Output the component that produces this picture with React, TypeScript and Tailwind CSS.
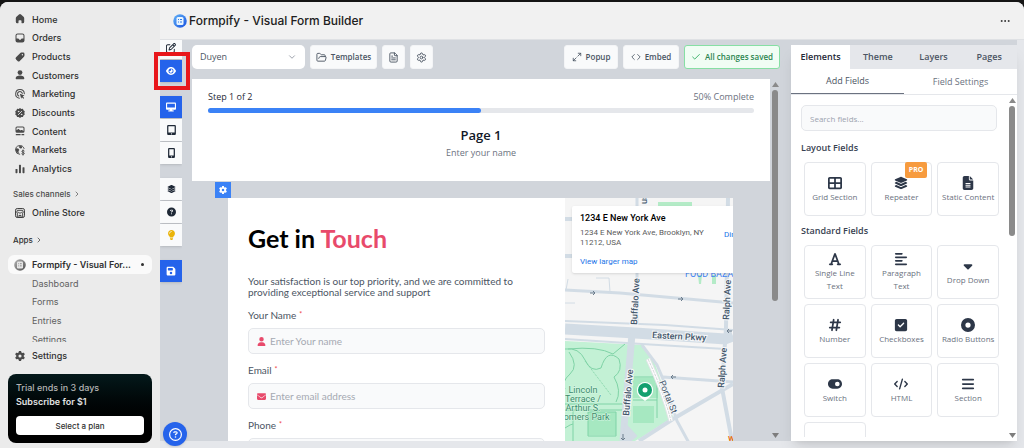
import React, { useState } from "react";
import {
  Check,
  ChevronDown,
  ChevronRight,
  Code,
  Ellipsis,
  FileText,
  FolderOpen,
  Maximize2,
  Settings,
} from "lucide-react";
import {
  FaAlignLeft,
  FaBars,
  FaCaretDown,
  FaCircleDot,
  FaCircleQuestion,
  FaCode,
  FaDesktop,
  FaEnvelope,
  FaEye,
  FaFileLines,
  FaFloppyDisk,
  FaFont,
  FaGear,
  FaHashtag,
  FaLayerGroup,
  FaLightbulb,
  FaLocationArrow,
  FaMobileScreenButton,
  FaRegCircleQuestion,
  FaRegPenToSquare,
  FaSquareCheck,
  FaTableCellsLarge,
  FaTabletScreenButton,
  FaToggleOn,
  FaUser,
} from "react-icons/fa6";

/* ---------------- SIDEBAR ICONS ---------------- */

const Glyph = ({ children }: { children: React.ReactNode }) => (
  <svg viewBox="0 0 20 20" className="w-3 h-3 shrink-0" fill="currentColor">
    {children}
  </svg>
);

const navItems = [
  {
    label: "Home",
    icon: (
      <path d="M8.3 2.6a2.6 2.6 0 0 1 3.4 0l4.2 3.7c.7.6 1.1 1.5 1.1 2.4v5.8a2.5 2.5 0 0 1-2.5 2.5h-1.3a.7.7 0 0 1-.7-.7v-3.1a1.2 1.2 0 0 0-1.2-1.2H8.7a1.2 1.2 0 0 0-1.2 1.2v3.1a.7.7 0 0 1-.7.7H5.5A2.5 2.5 0 0 1 3 14.500V8.700c0-.9.4-1.8 1.100-2.400z" />
    ),
  },
  {
    label: "Orders",
    icon: (
      <path
        fillRule="evenodd"
        d="M6 2.500h8A3.500 3.500 0 0 1 17.500 6v8a3.500 3.500 0 0 1-3.500 3.500H6A3.500 3.500 0 0 1 2.500 14V6A3.500 3.500 0 0 1 6 2.500zM6 4.200A1.800 1.800 0 0 0 4.200 6v5h2.600c.7 0 1.200.4 1.500 1 .3.600.8 1 1.700 1s1.400-.4 1.700-1c.3-.6.8-1 1.500-1h2.600V6A1.800 1.800 0 0 0 14 4.200z"
      />
    ),
  },
  {
    label: "Products",
    icon: (
      <path
        fillRule="evenodd"
        d="M10.600 3.300c.6-.6 1.400-.8 2.200-.8h2.400a2.300 2.300 0 0 1 2.300 2.300v2.400c0 .8-.3 1.600-.9 2.200l-7 7.200a2.600 2.600 0 0 1-3.700 0l-2.500-2.500a2.600 2.600 0 0 1 0-3.700zM14 7.300a1.200 1.200 0 1 0 0-2.400 1.200 1.200 0 0 0 0 2.400z"
      />
    ),
  },
  {
    label: "Customers",
    icon: (
      <>
        <circle cx="10" cy="6" r="4" />
        <path d="M2.800 15.600c0-3 3.200-4.600 7.200-4.600s7.200 1.600 7.200 4.600c0 .9-.7 1.600-1.600 1.600H4.400c-.9 0-1.600-.7-1.600-1.600z" />
      </>
    ),
  },
  {
    label: "Marketing",
    icon: (
      <>
        <g fill="none" stroke="currentColor" strokeWidth="1.700" strokeLinecap="round">
          <path d="M9 17A7.200 7.200 0 1 1 17.200 9.500" />
          <path d="M8 13.400A4 4 0 1 1 13.800 9" />
        </g>
        <path d="M9.800 9.700l7.700 2.700-3 1.600 2.600 2.600-1.300 1.300-2.600-2.600-1.200 2.500z" />
      </>
    ),
  },
  {
    label: "Discounts",
    icon: (
      <>
        <path d="M10 1.700l2.200 1.500 2.700-.1.900 2.500 2.200 1.600-.8 2.800.8 2.700-2.200 1.600-.9 2.500-2.700-.1L10 18.300l-2.200-1.600-2.700.1-.9-2.500L2 12.700 2.800 10 2 7.200l2.200-1.600.9-2.500 2.700.1z" />
        <g stroke="#ebebeb" strokeWidth="1.500" strokeLinecap="round" fill="#ebebeb">
          <path d="M7.300 12.700l5.400-5.400" />
          <circle cx="7.500" cy="7.700" r=".5" />
          <circle cx="12.500" cy="12.300" r=".5" />
        </g>
      </>
    ),
  },
  {
    label: "Content",
    icon: (
      <>
        <path
          fillRule="evenodd"
          d="M5 2.500h10A2.500 2.500 0 0 1 17.500 5v5.500A2.500 2.500 0 0 1 15 13H5a2.500 2.500 0 0 1-2.500-2.500V5A2.500 2.500 0 0 1 5 2.500zM4.200 8.800L6.500 7c.6-.4 1.200-.4 1.700.1l2.300 2.100 1.200-.8c.6-.4 1.300-.3 1.800.1l2.300 1.700V5c0-.5-.3-.8-.8-.8H5c-.5 0-.8.300-.8.800z"
        />
        <path d="M3 15h8v2H3zM12.500 15H17v2h-4.500z" />
      </>
    ),
  },
  {
    label: "Markets",
    icon: (
      <>
        <path
          fill="none"
          stroke="currentColor"
          strokeWidth="1.600"
          strokeLinecap="round"
          d="M9.500 17.200A7.300 7.300 0 1 1 16.800 7.500"
        />
        <path d="M3.500 7l3.500.500 2 2.500-1.500 1.500.5 4.500L4 13.500 2.800 10zM9 3l5 1-1 3-2.500.5L8.500 6z" />
        <path
          fill="none"
          stroke="currentColor"
          strokeWidth="1.600"
          strokeLinecap="round"
          d="M17 11.500c-1-1-3.800-.8-3.800 1 0 2 4 1 4 3.200 0 1.800-3 2-4.200.8M15 9.800v8.700"
        />
      </>
    ),
  },
  {
    label: "Analytics",
    icon: (
      <>
        <rect x="2.500" y="10" width="3.300" height="7" rx="1" />
        <rect x="8.300" y="3" width="3.300" height="14" rx="1" />
        <rect x="14.200" y="7" width="3.300" height="10" rx="1" />
      </>
    ),
  },
];

const StoreIcon = () => (
  <Glyph>
    <g fill="none" stroke="currentColor" strokeWidth="1.500">
      <rect x="2.500" y="2.500" width="15" height="15" rx="3" />
      <path d="M5.500 5.500h9l1 3.500c-.8 1.500-2.500 1.500-3.300 0-.9 1.500-3.500 1.500-4.400 0-.8 1.500-2.500 1.500-3.300 0zM5.500 10.500v7M14.500 10.500v7M8.300 17.500v-3.500h3.400v3.500" />
    </g>
  </Glyph>
);

const FormpifyLogo = ({ className, tone }: { className: string; tone: "blue" | "gray" }) => {
  const blue = tone === "blue";
  return (
    <svg viewBox="0 0 28 28" className={className}>
      <defs>
        <linearGradient id={`logo-${tone}`} x1="0" x2="1" y1="0" y2="1">
          <stop offset="0" stopColor={blue ? "#63b3f7" : "#b5b5b5"} />
          <stop offset="1" stopColor={blue ? "#1550e0" : "#4f4f4f"} />
        </linearGradient>
      </defs>
      <circle cx="14" cy="14" r="13.500" fill={`url(#logo-${tone})`} />
      <path
        d="M10 6h8a3 3 0 0 1 3 3v10a3 3 0 0 1-3 3h-8a3 3 0 0 1-3-3V9a3 3 0 0 1 3-3z"
        fill={blue ? "#e9f5ff" : "#e6e6e6"}
      />
      <path
        d="M10 11h2M14 11h4M10 16h2M14 16h4"
        stroke={blue ? "#2f7bea" : "#808080"}
        strokeWidth="2"
      />
    </svg>
  );
};

/* ---------------- SIDEBAR ---------------- */

const Sidebar = () => (
  <aside className="w-40 shrink-0 flex flex-col bg-[#ebebeb] font-[Inter,sans-serif] text-[9px] font-medium text-[#303030] overflow-hidden">
    <nav className="flex flex-col h-full min-h-0">
      <div className="h-[168px] mt-2 shrink-0 grid auto-rows-fr">
        {navItems.map((item) => (
          <a key={item.label} href="#" className="flex items-center gap-[6px] pl-[14px]">
            <span className="text-[#4a4a4a]">
              <Glyph>{item.icon}</Glyph>
            </span>
            {item.label}
          </a>
        ))}
      </div>
      <a href="#" className="mt-2 h-4 shrink-0 flex items-center gap-[2px] pl-[13px] text-[8px] text-[#4a4a4a]">
        Sales channels <ChevronRight size={8} />
      </a>
      <a href="#" className="mt-px h-[19px] shrink-0 flex items-center gap-[6px] pl-[14px]">
        <StoreIcon />
        Online Store
      </a>
      <a href="#" className="mt-[10px] h-4 shrink-0 flex items-center gap-[2px] pl-[13px] text-[8px]">
        Apps <ChevronRight size={8} />
      </a>
      <a
        href="#"
        className="mt-[7px] mx-2 h-[19px] shrink-0 flex items-center gap-[6px] pl-[6px] pr-2 rounded-md bg-[#fafafa] font-semibold"
      >
        <FormpifyLogo className="w-3 h-3 shrink-0" tone="gray" />
        <span className="flex-1 whitespace-nowrap">Formpify - Visual For...</span>
        <span className="w-[3px] h-[3px] rounded-full bg-[#303030]" />
      </a>
      <div className="flex-1 min-h-0 overflow-hidden pl-8 font-normal text-[#616161]">
        <div className="h-[75px] grid auto-rows-fr">
          {["Dashboard", "Forms", "Entries", "Settings"].map((label) => (
            <a key={label} href="#" className="flex items-center">
              {label}
            </a>
          ))}
        </div>
      </div>
      <a href="#" className="mt-1 mb-[9px] h-[19px] shrink-0 flex items-center gap-[6px] pl-[14px]">
        <FaGear className="w-3 h-[10px] text-[#4a4a4a]" />
        Settings
      </a>
      <div className="mx-2 mb-[5px] p-2 shrink-0 rounded-lg bg-linear-to-b from-[#04191b] to-black">
        <p className="mt-[-1px] leading-[14px] text-[#b5b5b5]">Trial ends in 3 days</p>
        <p className="leading-[14px] font-semibold text-[#e3e3e3]">Subscribe for $1</p>
        <button className="mt-[7px] w-full h-[19px] rounded bg-white text-[8px] font-medium text-[#303030]">
          Select a plan
        </button>
      </div>
    </nav>
  </aside>
);

/* ---------------- TOOL RAIL ---------------- */

const RailButton = ({
  label,
  active,
  children,
}: {
  label: string;
  active?: boolean;
  children: React.ReactNode;
}) => (
  <button
    aria-label={label}
    className={`w-[22px] h-[22px] shrink-0 flex items-center justify-center shadow-sm ${
      active ? "bg-[#2563eb] text-white" : "bg-gray-50 text-[#1f2937]"
    }`}
  >
    {children}
  </button>
);

const ToolRail = () => (
  <div className="relative w-[22px] shrink-0 text-[10px]">
    <div className="h-full flex flex-col gap-[14px] overflow-hidden">
      <div className="mt-[-3px] flex flex-col gap-px">
        <RailButton label="Edit"><FaRegPenToSquare /></RailButton>
        <RailButton label="Preview" active><FaEye /></RailButton>
      </div>
      <div className="flex flex-col gap-px">
        <RailButton label="Desktop" active><FaDesktop /></RailButton>
        <RailButton label="Tablet"><FaTabletScreenButton className="w-[9px]" /></RailButton>
        <RailButton label="Mobile"><FaMobileScreenButton className="w-[9px]" /></RailButton>
      </div>
      <div className="flex flex-col gap-px">
        <RailButton label="Layers"><FaLayerGroup className="w-[9px]" /></RailButton>
        <RailButton label="Help"><FaCircleQuestion className="w-[9px]" /></RailButton>
        <RailButton label="Tips"><FaLightbulb className="w-[9px] text-[#eab308]" /></RailButton>
      </div>
      <RailButton label="Save" active><FaFloppyDisk /></RailButton>
    </div>

    {/* Highlight around the preview button */}
    <div className="absolute -left-[6px] top-3 w-9 h-[38px] border-4 border-[#e8161a] z-10 pointer-events-none" />
    <button
      aria-label="Support"
      className="absolute left-[3px] -bottom-[5px] w-6 h-6 rounded-full bg-[#2563eb] text-white text-[13px] flex items-center justify-center shadow z-10"
    >
      <FaRegCircleQuestion />
    </button>
  </div>
);

/* ---------------- SCROLLBAR ---------------- */

const Scrollbar = ({ size }: { size: number }) => (
  <div className="w-[10px] shrink-0 flex flex-col items-center py-[3px] gap-[3px]">
    <svg viewBox="0 0 7 5" className="w-[7px] h-[5px] shrink-0 fill-[#8a8a8a]">
      <path d="M3.500 0L7 5H0z" />
    </svg>
    <div className="flex-1 w-[6px]">
      <div className="w-[6px] rounded-full bg-[#8a8a8a]" style={{ height: `${size}%` }} />
    </div>
    <svg viewBox="0 0 7 5" className="w-[7px] h-[5px] shrink-0 fill-[#7d7d7d]">
      <path d="M3.500 5L7 0H0z" />
    </svg>
  </div>
);

/* ---------------- MAP ---------------- */

const MapView = () => (
  <div className="relative w-[168px] shrink-0 overflow-hidden bg-[#f5f5f5] font-[Roboto,sans-serif]">
    <svg width="168" height="243" viewBox="0 0 168 243" fill="none">
      {/* parks */}
      <path d="M0 143L77 147 90 166 96 183 108 219 77 239 70 243H0z" fill="#c3f1d5" />
      <path d="M93 4h34v5H93zM133 77h4l-1 9h-2zM147 77h4v9h-4z" fill="#b4ebc7" />
      <path d="M23 214h28v23H23zM68 180h25v20H68zM68 208h21v17H68z" fill="#a6e8c1" />
      <g stroke="#7fd3a6" strokeWidth="1">
        <path d="M0 151q14-2 20 11t16 8q6-20 18-9 4 12-5 18 8 14 2 25M4 154q10 14 1 22t-5 15M3 151q30-3 45 5l12-10" />
        <path d="M0 206h60M0 212h60M8 212v31M51 214v24H23v-24zM68 179h24v41M68 202h24M0 230q6-4 8-4" />
        <path d="M20 163l26 34" strokeDasharray="1 1" />
      </g>

      {/* roads */}
      <g stroke="#d2dce5">
        <path d="M0 21h8M0 58h10" strokeWidth="4" />
        <path d="M0 92l55 3 113 10" strokeWidth="3" />
        <path d="M0 123l100 4 68 5M0 141l77 5 83 5" strokeWidth="2" />
        <path d="M0 105h10M1 92l2-11M31 80h13l1 14" strokeWidth="1" />
        <path d="M72 0v127" strokeWidth="3" />
        <path d="M0 131l70 4 90 6 8-3" strokeWidth="11" />
        <path d="M67 136L61 205l-3 38" strokeWidth="7" />
        <path d="M163 0l-2 130-4 60 10 53" strokeWidth="4" />
        <path d="M77 147l15 20 6 14 14 42 12 22" strokeWidth="3" />
        <path d="M98 179l70 5" strokeWidth="3" />
        <path d="M74 243l34-22 60-35" strokeWidth="4" />
        <path d="M60 225l12 13-6 5h-8z" fill="#d2dce5" />
      </g>
      <path d="M83 161q16 34 23 62" stroke="#e3e5e8" strokeWidth="5" />
      <path d="M83 161q16 34 23 62" stroke="#fff" strokeWidth="3" />
      <path d="M83 161q16 34 23 62" stroke="#cfd3d6" strokeWidth="1" strokeDasharray="3 1" />
      <g stroke="#6b7c8c" strokeWidth="1">
        <path d="M25 95h5M28 93l2 2-2 2M113 101h5M116 99l2 2-2 2M106 179h5M108 177l-2 2 2 2M162 133h5M164 131l-2 2 2 2M58 236v6M56 240l2 2 2-2" />
      </g>

      {/* labels */}
      <g fill="#43566a" stroke="#f5f7f9" strokeWidth="2" paintOrder="stroke" fontSize="9" fontWeight="500">
        <text transform="translate(82 6) rotate(-90)">us</text>
        <text transform="translate(72 127) rotate(-87)">Buffalo Ave</text>
        <text transform="translate(164 122) rotate(-87)">Ralph Ave</text>
        <text transform="translate(64 218) rotate(-85)">Buffalo Ave</text>
        <text transform="translate(159 190) rotate(-86)">Ralph Ave</text>
        <text transform="translate(87 140) rotate(3)">Eastern Pkwy</text>
        <text transform="translate(94 184) rotate(68)" fontWeight="400">Portal St</text>
      </g>
      <text x="120" y="79" fontSize="9" fill="#4285f4">FOOD BAZAAR</text>
      <g fill="#3a8b6a" stroke="#d9f7e5" strokeWidth="1" paintOrder="stroke" fontSize="9" textAnchor="middle">
        <text x="18" y="195">Lincoln</text>
        <text x="18" y="204">Terrace /</text>
        <text x="18" y="213">Arthur S.</text>
        <text x="19" y="222">Somers Park</text>
      </g>
      <text x="163" y="243" fontSize="8" fontWeight="700" fill="#e8711a">W</text>

      {/* pin */}
      <path d="M80 203l-5-4a8 8 0 1 1 10 0z" fill="#fff" />
      <circle cx="80" cy="192" r="8" fill="#fff" />
      <circle cx="80" cy="192" r="7" fill="#13a06f" />
      <circle cx="80" cy="192" r="2.500" fill="#fff" />
    </svg>

    {/* Address card floats on the map */}
    <div className="absolute left-[7px] right-0 top-2 h-[67px] pl-2 pt-[6px] bg-white rounded-l-xs shadow text-[8px] leading-[10px] text-[#5b5b5b] overflow-hidden">
      <p className="text-[9px] leading-3 font-medium text-black">1234 E New York Ave</p>
      <p className="mt-1">1234 E New York Ave, Brooklyn, NY<br />11212, USA</p>
      <a href="#" className="block mt-[9px] text-[#1a73e8]">View larger map</a>
      <a href="#" className="absolute left-[152px] top-6 text-[#1a73e8]">Directions</a>
    </div>
  </div>
);

/* ---------------- FORM CANVAS ---------------- */

const FormField = ({
  id,
  label,
  placeholder,
  icon,
}: {
  id: string;
  label: string;
  placeholder: string;
  icon: React.ReactNode;
}) => (
  <div className="mb-2">
    <label htmlFor={id} className="flex gap-[3px] leading-4 text-[#4b5563]">
      {label} <span className="text-[7px] leading-[14px] text-[#ef4444]">*</span>
    </label>
    <div className="mt-[5px] h-[26px] flex items-center gap-1 pl-[7px] rounded-[5px] border border-gray-200 bg-gray-50">
      <span className="w-[10px] flex justify-center text-[9px] text-[#e84a6b]">{icon}</span>
      <input
        id={id}
        placeholder={placeholder}
        className="flex-1 min-w-0 bg-transparent outline-none placeholder:text-[#a5a9b2]"
      />
    </div>
  </div>
);

const Canvas = () => (
  <div className="flex-1 min-h-0 flex">
    <div className="flex-1 min-w-0 overflow-hidden flex flex-col">
      <section className="h-[102px] shrink-0 px-4 pt-[11px] bg-white text-[9px]">
        <div className="flex justify-between leading-[14px]">
          <span className="font-medium text-[#1f2937]">Step 1 of 2</span>
          <span className="text-[#6b7280]">50% Complete</span>
        </div>
        <div className="mt-1 h-[5px] rounded-full bg-gray-200">
          <div className="w-1/2 h-full rounded-full bg-[#3b82f6]" />
        </div>
        <h2 className="mt-3 text-[13px] leading-5 font-semibold text-center text-[#111827]">Page 1</h2>
        <p className="mt-px leading-[14px] text-center text-[#6b7280]">Enter your name</p>
      </section>

      <button
        aria-label="Page settings"
        className="mt-px ml-[23px] w-4 h-4 shrink-0 flex items-center justify-center bg-[#3b82f6] text-white text-[8px]"
      >
        <FaGear />
      </button>

      <div className="flex-1 min-h-0 ml-9 mr-[37px] flex overflow-hidden">
        <form className="flex-1 min-w-0 h-full overflow-hidden px-5 bg-white font-[Lato,sans-serif] text-[10px]">
          <h1 className="mt-6 text-[25px] leading-8 font-bold text-black whitespace-nowrap">
            Get in <span className="text-[#e84a6b]">Touch</span>
          </h1>
          <p className="mt-[22px] mb-[9px] leading-[11px] text-[#4b5563] max-w-[270px]">
            Your satisfaction is our top priority, and we are committed to providing exceptional
            service and support
          </p>
          <FormField id="name" label="Your Name" placeholder="Enter Your name" icon={<FaUser />} />
          <FormField id="email" label="Email" placeholder="Enter email address" icon={<FaEnvelope />} />
          <FormField id="phone" label="Phone" placeholder="" icon={<FaUser />} />
        </form>
        <MapView />
      </div>
    </div>
    <Scrollbar size={62} />
  </div>
);

const toolButton =
  "h-6 flex items-center justify-center gap-1 rounded-[3px] bg-gray-50 border border-gray-100 text-[8px] font-semibold text-[#4b5563] whitespace-nowrap";

const Toolbar = () => (
  <div className="h-6 mb-[10px] shrink-0 flex items-center gap-[5px]">
    <div className="relative">
      <select
        aria-label="Form"
        className="block appearance-none w-[113px] h-6 pl-2 rounded-[5px] bg-white text-[9px] text-[#4b5563]"
      >
        <option>Duyen</option>
      </select>
      <ChevronDown size={10} className="absolute right-2 top-[7px] text-[#8b929e] pointer-events-none" />
    </div>
    <button className={`${toolButton} w-[67px]`}><FolderOpen size={11} className="shrink-0" />Templates</button>
    <button aria-label="Form notes" className={`${toolButton} w-[23px]`}><FileText size={11} className="shrink-0" /></button>
    <button aria-label="Form settings" className={`${toolButton} w-[23px]`}><Settings size={11} className="shrink-0" /></button>
    <button className={`${toolButton} w-[54px] ml-auto`}><Maximize2 size={10} className="shrink-0" />Popup</button>
    <button className={`${toolButton} w-14`}><Code size={10} className="shrink-0" />Embed</button>
    <button className="h-6 w-24 flex items-center justify-center gap-1 rounded-[3px] border border-[#86dfa4] bg-[#f0fdf4] text-[8px] font-semibold text-[#2c8650] whitespace-nowrap">
      <Check size={10} className="text-[#22a655]" />
      All changes saved
    </button>
  </div>
);

/* ---------------- ELEMENTS PANEL ---------------- */

const layoutFields = [
  { label: "Grid Section", icon: <FaTableCellsLarge /> },
  { label: "Repeater", icon: <FaLayerGroup />, pro: true },
  { label: "Static Content", icon: <FaFileLines /> },
];

const standardFields = [
  { label: "Single Line Text", icon: <FaFont /> },
  { label: "Paragraph Text", icon: <FaAlignLeft /> },
  { label: "Drop Down", icon: <FaCaretDown /> },
  { label: "Number", icon: <FaHashtag /> },
  { label: "Checkboxes", icon: <FaSquareCheck /> },
  { label: "Radio Buttons", icon: <FaCircleDot /> },
  { label: "Switch", icon: <FaToggleOn /> },
  { label: "HTML", icon: <FaCode /> },
  { label: "Section", icon: <FaBars /> },
  { label: "Address", icon: <FaLocationArrow /> },
];

type Field = { label: string; icon: React.ReactNode; pro?: boolean };

const FieldGrid = ({ title, fields }: { title: string; fields: Field[] }) => (
  <section>
    <h3 className="text-[9px] leading-[14px] font-semibold text-[#374151]">{title}</h3>
    <div className="mt-[7px] ml-[3px] -mr-[2px] grid grid-cols-3 gap-[5px]">
      {fields.map((field) => (
        <button
          key={field.label}
          className="relative h-[54px] px-[2px] flex flex-col items-center justify-center rounded border border-gray-200 bg-white text-[8px] leading-[13px] text-[#6b7280]"
        >
          <span className="text-[14px] leading-4 text-[#2d3748]">{field.icon}</span>
          <span className={field.label.endsWith("Text") ? "w-10" : "whitespace-nowrap"}>{field.label}</span>
          {field.pro && (
            <span className="absolute right-1 -top-px h-4 px-1 rounded-xs bg-[#f79b3e] text-white text-[7px] leading-4 font-bold">
              PRO
            </span>
          )}
        </button>
      ))}
    </div>
  </section>
);

const ElementsPanel = () => {
  const [tab, setTab] = useState("Elements");
  const [search, setSearch] = useState("");

  return (
    <aside className="w-[226px] shrink-0 mt-[5px] flex flex-col bg-white shadow-lg">
      <div className="h-6 shrink-0 grid grid-cols-[59px_1fr_1fr_1fr] bg-gray-200 text-[9px] font-semibold">
        {["Elements", "Theme", "Layers", "Pages"].map((name) => (
          <button
            key={name}
            onClick={() => setTab(name)}
            className={tab === name ? "bg-white text-[#1f2937]" : "text-[#4b5563]"}
          >
            {name}
          </button>
        ))}
      </div>
      <div className="h-[26px] shrink-0 flex border-b border-gray-200 text-[9px] text-[#6b7280]">
        <button className="flex-1 border-b border-[#6b7280] text-[#4b5563]">Add Fields</button>
        <button className="flex-1">Field Settings</button>
      </div>
      <div className="flex-1 min-h-0 flex">
        <div className="flex-1 min-w-0 overflow-hidden px-[10px] pt-[10px] mb-1">
          <input
            aria-label="Search fields"
            placeholder="Search fields..."
            value={search}
            onChange={(e) => setSearch(e.target.value)}
            className="block w-full h-[26px] px-2 rounded-[5px] border border-gray-200 bg-gray-50 text-[8px] outline-none placeholder:text-[#9ca3af]"
          />
          <div className="mt-[10px] flex flex-col gap-2">
            <FieldGrid title="Layout Fields" fields={layoutFields} />
            <FieldGrid title="Standard Fields" fields={standardFields} />
          </div>
        </div>
        <Scrollbar size={40} />
      </div>
    </aside>
  );
};

/* ---------------- APP ---------------- */

const App: React.FC = () => (
  <div className="h-screen pt-[2px] bg-[#151515] font-['Open_Sans',sans-serif]">
    <div className="h-full flex rounded-t-lg overflow-hidden bg-gray-200">
      <Sidebar />
      <div className="flex-1 min-w-0 flex flex-col">
        <header className="h-[38px] shrink-0 flex items-center justify-between px-[13px] bg-[#f1f1f1] border-b border-[#dfe1e4] font-[Inter,sans-serif]">
          <h1 className="flex items-center gap-[2px] text-[12px] font-medium text-[#202020]">
            <FormpifyLogo className="w-[14px] h-[14px]" tone="blue" />
            Formpify - Visual Form Builder
          </h1>
          <button aria-label="More actions" className="text-[#303030]">
            <Ellipsis size={12} />
          </button>
        </header>
        <div className="flex-1 min-h-0 mb-[7px] mr-[7px] flex bg-[#d1d5db]">
          <ToolRail />
          <main className="flex-1 min-w-0 pl-[10px] pr-[11px] pt-[5px] flex flex-col">
            <Toolbar />
            <Canvas />
          </main>
          <ElementsPanel />
        </div>
      </div>
    </div>
  </div>
);

export default App;
